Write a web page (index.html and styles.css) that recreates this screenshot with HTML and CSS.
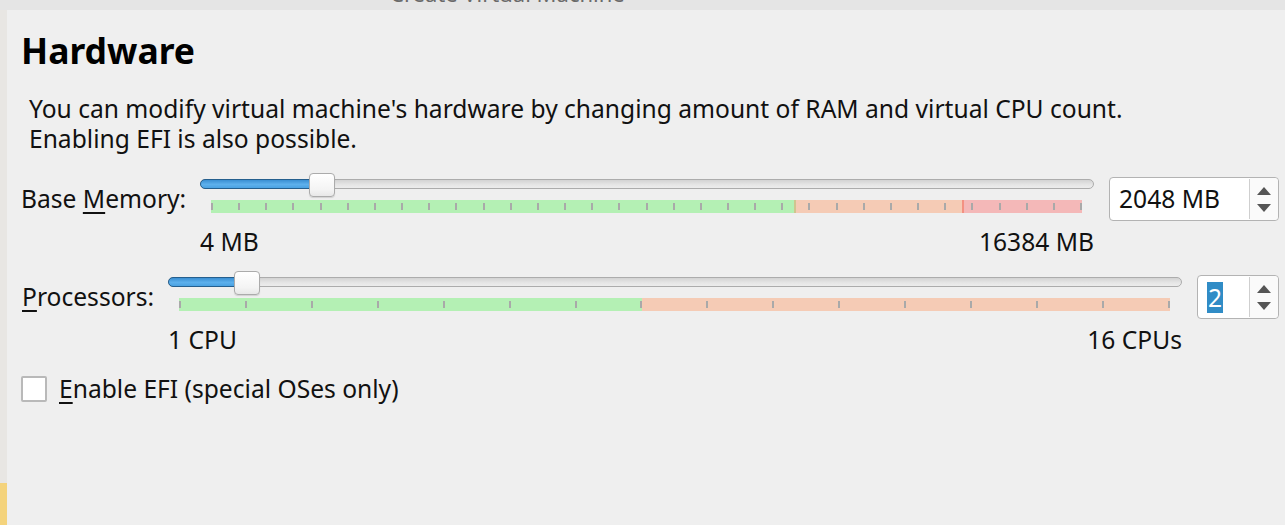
FILE: index.html
```html
<!DOCTYPE html>
<html>
<head>
<meta charset="utf-8">
<link rel="stylesheet" href="styles.css">
</head>
<body>
<div class="titlebar"><span class="title-text">Create Virtual Machine</span></div>
<div class="window">
  <div class="edge"><div class="edge-top"></div><div class="edge-yellow"></div></div>
  <div class="main">
    <h1 class="heading">Hardware</h1>
    <p class="desc">You can modify virtual machine's hardware by changing amount of RAM and virtual CPU count.<br>Enabling EFI is also possible.</p>

    <div class="row">
      <div class="row-label mem-label"><span>Base <u>M</u>emory:</span></div>
      <div class="slider">
        <div class="track">
          <div class="groove"><div class="fill" style="--v:0.125"></div></div>
          <div class="handle" style="--v:0.125"></div>
        </div>
        <div class="scale">
          <div class="segments">
            <div class="seg green" style="width:66.9%"></div>
            <div class="seg mark-olive"></div>
            <div class="seg orange" style="width:19.1%"></div>
            <div class="seg mark-red"></div>
            <div class="seg red"></div>
          </div>
          <div class="ticks mem-ticks">
            <i></i><i></i><i></i><i></i><i></i><i></i><i></i><i></i><i></i><i></i><i></i>
            <i></i><i></i><i></i><i></i><i></i><i></i><i></i><i></i><i></i><i></i><i></i>
            <i></i><i></i><i></i><i></i><i></i><i></i><i></i><i></i><i></i><i></i><i></i>
          </div>
        </div>
        <div class="minmax"><span>4 MB</span><span>16384 MB</span></div>
      </div>
      <div class="spin mem-spin">
        <div class="spin-text">2048 MB</div>
        <div class="spin-arrows">
          <svg width="14" height="8" viewBox="0 0 14 8"><path d="M0 8 L7 0 L14 8 Z" fill="#555"/></svg>
          <svg width="14" height="8" viewBox="0 0 14 8"><path d="M0 0 L14 0 L7 8 Z" fill="#555"/></svg>
        </div>
      </div>
    </div>

    <div class="row row-cpu">
      <div class="row-label cpu-label"><span><u>P</u>rocessors:</span></div>
      <div class="slider">
        <div class="track">
          <div class="groove"><div class="fill" style="--v:0.0667"></div></div>
          <div class="handle" style="--v:0.0667"></div>
        </div>
        <div class="scale">
          <div class="segments">
            <div class="seg green" style="width:46.7%"></div>
            <div class="seg orange" style="flex:1"></div>
          </div>
          <div class="ticks">
            <i></i><i></i><i></i><i></i><i></i><i></i><i></i><i></i>
            <i></i><i></i><i></i><i></i><i></i><i></i><i></i><i></i>
          </div>
        </div>
        <div class="minmax"><span>1 CPU</span><span>16 CPUs</span></div>
      </div>
      <div class="spin cpu-spin">
        <div class="spin-text"><span class="sel">2</span></div>
        <div class="spin-arrows">
          <svg width="14" height="8" viewBox="0 0 14 8"><path d="M0 8 L7 0 L14 8 Z" fill="#555"/></svg>
          <svg width="14" height="8" viewBox="0 0 14 8"><path d="M0 0 L14 0 L7 8 Z" fill="#555"/></svg>
        </div>
      </div>
    </div>

    <label class="check-row"><span class="checkbox"></span><span><u>E</u>nable EFI (special OSes only)</span></label>
  </div>
</div>
</body>
</html>
```
FILE: styles.css
```css
* { box-sizing: border-box; }
html, body { margin: 0; padding: 0; }
body {
  width: 1285px;
  height: 525px;
  overflow: hidden;
  background: #efefef;
  font-family: "Noto Sans", "Open Sans", sans-serif;
  font-size: 24.6px;
  color: #111;
  display: flex;
  flex-direction: column;
}
u { text-decoration-thickness: 2px; text-underline-offset: 4px; }

.titlebar {
  height: 10px;
  background: #e5e5e5;
  overflow: hidden;
  padding-left: 390px;
  flex: none;
}
.title-text {
  display: block;
  margin-top: -21px;
  line-height: 28px;
  font-size: 22px;
  color: #6a6a6a;
}

.window { flex: 1; display: flex; }
.edge { width: 7px; display: flex; flex-direction: column; }
.edge-top { flex: 1; background: #e8e6e3; }
.edge-yellow { height: 42px; background: #f4d37c; }

.main { flex: 1; padding: 0 6px 0 14px; }

.heading {
  margin: 20px 0 0 0;
  font-size: 35.5px;
  line-height: 40px;
  font-weight: 700;
  color: #000;
}
.desc {
  margin: 24px 0 0 0;
  padding-left: 8px;
  line-height: 30px;
}

.row { display: flex; align-items: flex-start; margin-top: 19px; }
.row-cpu { margin-top: 14px; }
.row-label {
  height: 44px;
  margin-top: 4px;
  display: flex;
  align-items: center;
  line-height: 30px;
}
.mem-label { width: 179px; }
.cpu-label { width: 147px; padding-left: 1px; }

.slider { flex: 1; }
.track { height: 24px; padding-top: 6px; position: relative; }
.groove {
  position: relative;
  height: 10px;
  border: 1px solid #acacac;
  border-radius: 5px;
  background: linear-gradient(#d3d3d3, #e6e6e6 60%, #ececec);
}
.fill {
  position: absolute;
  left: -1px;
  top: -1px;
  height: 10px;
  width: calc((100% - 26px) * var(--v) + 14px);
  border: 1px solid #255f8e;
  border-radius: 5px;
  background: linear-gradient(#3a8fd2, #5db0ec 55%, #4aa2e2);
}
.handle {
  position: absolute;
  top: 0;
  left: calc((100% - 26px) * var(--v));
  width: 26px;
  height: 24px;
  border: 1px solid #ababab;
  border-radius: 4px;
  background: linear-gradient(#ffffff, #f4f4f4 70%, #e8e8e8);
  box-shadow: 0 1px 1px rgba(0,0,0,0.12);
}

.scale {
  margin: 3px 12px 0 11px;
  height: 13px;
  display: grid;
}
.segments, .ticks { grid-area: 1 / 1; }
.segments { display: flex; }
.seg { height: 13px; }
.green { background: #b4f0b4; }
.orange { background: #f5cbb5; }
.red { flex: 1; background: #f4b8b8; }
.mark-olive { width: 2px; background: #cfc58f; }
.mark-red { width: 2px; background: #f39182; }
.ticks {
  display: flex;
  justify-content: space-between;
  align-items: center;
}
.ticks i {
  display: block;
  width: 2px;
  height: 7px;
  background: #a9a9a9;
}

.minmax {
  margin-top: 14px;
  display: flex;
  justify-content: space-between;
  line-height: 30px;
}

.spin {
  margin-top: 4px;
  margin-left: 15px;
  height: 44px;
  border: 1px solid #b3b3b3;
  border-radius: 4px;
  background: #fff;
  display: flex;
}
.mem-spin { width: 170px; }
.cpu-spin { width: 82px; }
.spin-text {
  flex: 1;
  display: flex;
  align-items: center;
  padding-left: 9px;
  line-height: 30px;
  border-right: 1px solid #cfcfcf;
  margin: 1px 0;
}
.sel { background: #308cc6; color: #fff; padding: 0 1px; line-height: 31px; }
.spin-arrows {
  width: 28px;
  display: flex;
  flex-direction: column;
  align-items: center;
  justify-content: center;
  gap: 9px;
  background: #fafafa;
  border-radius: 0 4px 4px 0;
}
.spin-arrows svg { display: block; }

.check-row {
  margin-top: 19px;
  display: flex;
  align-items: center;
  gap: 12px;
  line-height: 30px;
}
.checkbox {
  width: 26px;
  height: 26px;
  border: 2px solid #b9b9b9;
  border-radius: 2px;
  background: #fff;
}
```
